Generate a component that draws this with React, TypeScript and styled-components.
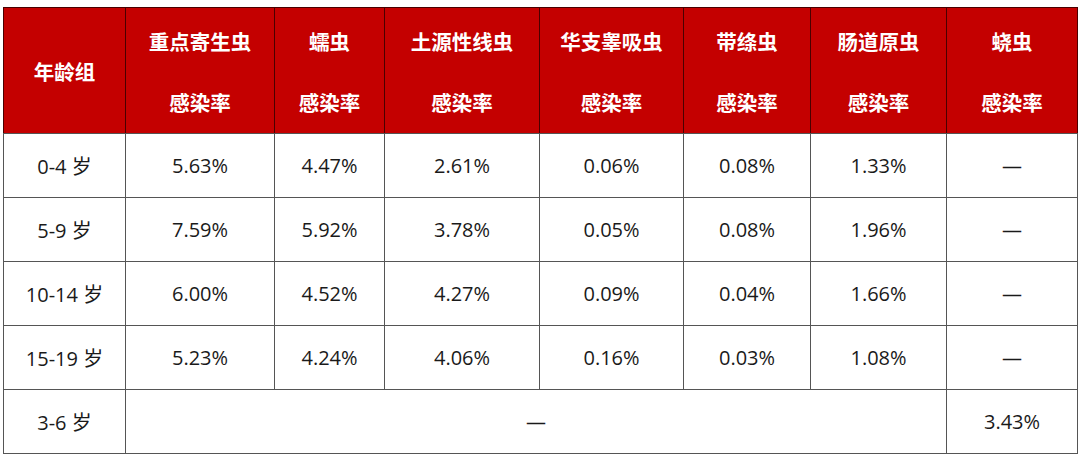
import styled, { createGlobalStyle } from 'styled-components';

const GlobalStyle = createGlobalStyle`
  html, body {
    margin: 0;
    padding: 0;
    background: #ffffff;
  }
  body {
    padding: 7px 3px 0 3px;
    font-family: "Open Sans", "Noto Sans CJK SC", sans-serif;
  }
`;

const COLUMN_WIDTHS = [122, 149, 110, 155, 144, 127, 136, 131];

const HEADERS = ['重点寄生虫', '蠕虫', '土源性线虫', '华支睾吸虫', '带绦虫', '肠道原虫', '蛲虫'];

const ROWS: { age: string; values: string[] }[] = [
  { age: '0-4 岁', values: ['5.63%', '4.47%', '2.61%', '0.06%', '0.08%', '1.33%', '—'] },
  { age: '5-9 岁', values: ['7.59%', '5.92%', '3.78%', '0.05%', '0.08%', '1.96%', '—'] },
  { age: '10-14 岁', values: ['6.00%', '4.52%', '4.27%', '0.09%', '0.04%', '1.66%', '—'] },
  { age: '15-19 岁', values: ['5.23%', '4.24%', '4.06%', '0.16%', '0.03%', '1.08%', '—'] },
];

const Table = styled.table`
  width: 1074px;
  border-collapse: collapse;
  table-layout: fixed;
  border: 1px solid #555555;
`;

const HeadCell = styled.th`
  height: 125px;
  padding: 0;
  background: #c40000;
  color: #ffffff;
  font-size: 20.5px;
  font-weight: 700;
  text-align: center;
  vertical-align: middle;
  border: 1px solid #4a0000;
  border-bottom-color: #555555;
`;

const HeadStack = styled.div`
  display: flex;
  flex-direction: column;
  align-items: center;
  gap: 36px;
  line-height: 25px;
  padding-top: 4px;
`;

const Cell = styled.td`
  height: 63px;
  padding: 0;
  color: #1a1a1a;
  font-size: 20px;
  text-align: center;
  vertical-align: middle;
  border: 1px solid #555555;
`;

export default function App() {
  return (
    <>
      <GlobalStyle />
      <Table>
        <colgroup>
          {COLUMN_WIDTHS.map((w, i) => (
            <col key={i} style={{ width: w }} />
          ))}
        </colgroup>
        <thead>
          <tr>
            <HeadCell>年龄组</HeadCell>
            {HEADERS.map((h) => (
              <HeadCell key={h}>
                <HeadStack>
                  <span>{h}</span>
                  <span>感染率</span>
                </HeadStack>
              </HeadCell>
            ))}
          </tr>
        </thead>
        <tbody>
          {ROWS.map((row) => (
            <tr key={row.age}>
              <Cell>{row.age}</Cell>
              {row.values.map((v, i) => (
                <Cell key={i}>{v}</Cell>
              ))}
            </tr>
          ))}
          <tr>
            <Cell>3-6 岁</Cell>
            <Cell colSpan={6}>—</Cell>
            <Cell>3.43%</Cell>
          </tr>
        </tbody>
      </Table>
    </>
  );
}
